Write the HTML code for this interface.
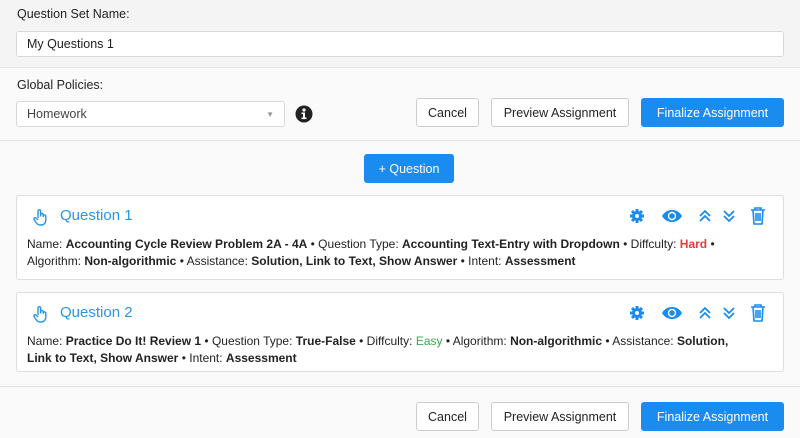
<!DOCTYPE html>
<html><head><style>
*{box-sizing:border-box;margin:0;padding:0}
body{width:800px;height:438px;overflow:hidden;background:#fafafa;font-family:"Liberation Sans",sans-serif;color:#222;font-size:12px;position:relative}
.abs{position:absolute}
.top{left:0;top:0;width:800px;height:68px;background:#f4f4f4;border-bottom:1px solid #e4e4e4}
.lbl{font-size:12.5px;color:#222}
.inp{background:#fff;border:1px solid #d8d8d8;border-radius:3px;font-size:12.5px;padding-left:10px;display:flex;align-items:center}
.btn{border:1px solid #ccc;border-radius:3px;background:#fff;font-size:12.5px;display:flex;align-items:center;justify-content:center;color:#222}
.pri{background:#1a8cf0;border-color:#1a8cf0;color:#fff}
.hr{left:0;width:800px;height:1px;background:#e4e4e4}
.card{left:16px;width:768px;background:#fff;border:1px solid #ddd;border-radius:3px}
.title{position:absolute;left:43px;top:11px;font-size:15px;color:#2596e8}
.body{position:absolute;left:10px;top:40px;width:725px;font-size:12px;line-height:17px;color:#222}
b{font-weight:bold}
.icons{position:absolute;right:14px;top:11px;display:flex;gap:0}
svg{display:block}
</style></head><body>
<div class="abs top"></div>
<div class="abs lbl" style="left:17px;top:7px">Question Set Name:</div>
<div class="abs inp" style="left:16px;top:31px;width:768px;height:26px">My Questions 1</div>
<div class="abs lbl" style="left:17px;top:78px">Global Policies:</div>
<div class="abs inp" style="left:16px;top:101px;width:269px;height:26px;color:#444">Homework<span style="position:absolute;right:10px;top:8px;font-size:8px;color:#999">▼</span></div>
<svg class="abs" style="left:295px;top:105px" width="18" height="18" viewBox="0 0 18 18"><circle cx="9" cy="9" r="8.5" fill="#222"/><circle cx="9" cy="5" r="1.6" fill="#fff"/><path d="M6.5 7.5h3.5v5h1.5v1.6h-5v-1.6h1.5v-3.4h-1.5z" fill="#fff"/></svg>
<div class="abs btn" style="left:416px;top:98px;width:63px;height:29px">Cancel</div>
<div class="abs btn" style="left:491px;top:98px;width:138px;height:29px">Preview Assignment</div>
<div class="abs btn pri" style="left:641px;top:98px;width:143px;height:29px">Finalize Assignment</div>
<div class="abs hr" style="top:140px"></div>
<div class="abs btn pri" style="left:364px;top:154px;width:90px;height:29px">+ Question</div>

<div class="abs card" style="top:195px;height:85px">
<svg class="abs" style="left:15px;top:12px" width="18" height="18" viewBox="0 0 18 18" fill="none" stroke="#2596e8" stroke-width="1.4"><path d="M6 10V3a1.3 1.3 0 0 1 2.6 0v5.5M8.6 8V6.8a1.3 1.3 0 0 1 2.6 0V9M11.2 8.2a1.3 1.3 0 0 1 2.6 0V12c0 3-2 5-4.6 5H8c-2 0-3-1-4-2.5L2 11.5a1.3 1.3 0 0 1 2-1.5L6 12"/></svg>
<div class="title">Question 1</div>
<div class="icons" style="top:10px">
<svg width="32" height="20" viewBox="0 0 32 20"><g transform="translate(7,3)" fill="#1a8cf0"><circle cx="7" cy="7" r="5"/><g stroke="#1a8cf0" stroke-width="3"><path d="M7 0v14M0 7h14M2 2l10 10M12 2L2 12"/></g><circle cx="7" cy="7" r="2" fill="#fff"/></g></svg>
<svg width="36" height="20" viewBox="0 0 36 20"><path d="M7 10c3-5 7-6 10-6s7 1 10 6c-3 5-7 6-10 6s-7-1-10-6z" fill="#1a8cf0"/><circle cx="17" cy="10" r="4.2" fill="#fff"/><circle cx="17" cy="10" r="2.8" fill="#1a8cf0"/></svg>
<svg width="28" height="20" viewBox="0 0 28 20" fill="none" stroke="#1a8cf0" stroke-width="1.8"><path d="M9 10l5-5 5 5M9 15l5-5 5 5"/></svg>
<svg width="28" height="20" viewBox="0 0 28 20" fill="none" stroke="#1a8cf0" stroke-width="1.8"><path d="M5 5l5 5 5-5M5 10l5 5 5-5"/></svg>
<svg width="22" height="20" viewBox="0 0 22 20" fill="none" stroke="#1a8cf0" stroke-width="1.6"><path d="M4 4h14M8 4V2h6v2M6 4l1 14h8l1-14M9 7v8M11 7v8M13 7v8"/></svg>
</div>
<div class="body">Name: <b>Accounting Cycle Review Problem 2A - 4A</b> • Question Type: <b>Accounting Text-Entry with Dropdown</b> • Diffculty: <b style="color:#d9413a">Hard</b> • Algorithm: <b>Non-algorithmic</b> • Assistance: <b>Solution, Link to Text, Show Answer</b> • Intent: <b>Assessment</b></div>
</div>

<div class="abs card" style="top:292px;height:80px">
<svg class="abs" style="left:15px;top:12px" width="18" height="18" viewBox="0 0 18 18" fill="none" stroke="#2596e8" stroke-width="1.4"><path d="M6 10V3a1.3 1.3 0 0 1 2.6 0v5.5M8.6 8V6.8a1.3 1.3 0 0 1 2.6 0V9M11.2 8.2a1.3 1.3 0 0 1 2.6 0V12c0 3-2 5-4.6 5H8c-2 0-3-1-4-2.5L2 11.5a1.3 1.3 0 0 1 2-1.5L6 12"/></svg>
<div class="title">Question 2</div>
<div class="icons" style="top:10px">
<svg width="32" height="20" viewBox="0 0 32 20"><g transform="translate(7,3)" fill="#1a8cf0"><circle cx="7" cy="7" r="5"/><g stroke="#1a8cf0" stroke-width="3"><path d="M7 0v14M0 7h14M2 2l10 10M12 2L2 12"/></g><circle cx="7" cy="7" r="2" fill="#fff"/></g></svg>
<svg width="36" height="20" viewBox="0 0 36 20"><path d="M7 10c3-5 7-6 10-6s7 1 10 6c-3 5-7 6-10 6s-7-1-10-6z" fill="#1a8cf0"/><circle cx="17" cy="10" r="4.2" fill="#fff"/><circle cx="17" cy="10" r="2.8" fill="#1a8cf0"/></svg>
<svg width="28" height="20" viewBox="0 0 28 20" fill="none" stroke="#1a8cf0" stroke-width="1.8"><path d="M9 10l5-5 5 5M9 15l5-5 5 5"/></svg>
<svg width="28" height="20" viewBox="0 0 28 20" fill="none" stroke="#1a8cf0" stroke-width="1.8"><path d="M5 5l5 5 5-5M5 10l5 5 5-5"/></svg>
<svg width="22" height="20" viewBox="0 0 22 20" fill="none" stroke="#1a8cf0" stroke-width="1.6"><path d="M4 4h14M8 4V2h6v2M6 4l1 14h8l1-14M9 7v8M11 7v8M13 7v8"/></svg>
</div>
<div class="body">Name: <b>Practice Do It! Review 1</b> • Question Type: <b>True-False</b> • Diffculty: <span style="color:#3aa84a">Easy</span> • Algorithm: <b>Non-algorithmic</b> • Assistance: <b>Solution, Link to Text, Show Answer</b> • Intent: <b>Assessment</b></div>
</div>

<div class="abs hr" style="top:386px"></div>
<div class="abs btn" style="left:416px;top:402px;width:63px;height:29px">Cancel</div>
<div class="abs btn" style="left:491px;top:402px;width:138px;height:29px">Preview Assignment</div>
<div class="abs btn pri" style="left:641px;top:402px;width:143px;height:29px">Finalize Assignment</div>
</body></html>
